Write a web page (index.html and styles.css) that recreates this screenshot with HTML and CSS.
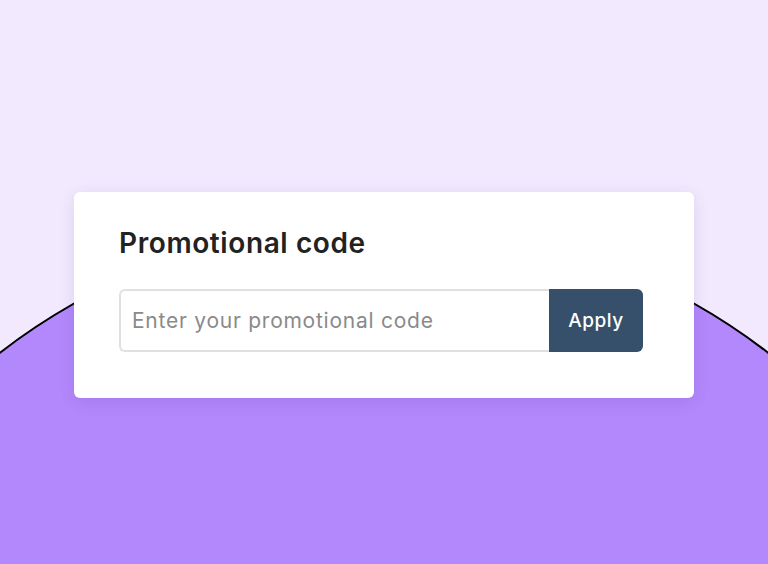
FILE: index.html
```html
<!DOCTYPE html>
<html lang="en">
<head>
	<meta charset="UTF-8">
	<title>Promotional code</title>
	<link rel="stylesheet" href="styles.css">
</head>
<body>
	<div class="stage">
		<div class="blob"></div>
		<div class="card">
			<h2 class="title">Promotional code</h2>
			<form class="promo">
				<input class="promo-input" type="text" placeholder="Enter your promotional code">
				<button class="promo-btn" type="button">Apply</button>
			</form>
		</div>
	</div>
</body>
</html>
```

FILE: styles.css
```css
*{
	margin: 0;
	padding: 0;
	box-sizing: border-box;
}
body{
	background: #f2e9fe;
	font-family: Inter, "Noto Sans", sans-serif;
}
.stage{
	position: relative;
	width: 768px;
	height: 564px;
	overflow: hidden;
	padding-top: 192px;
	padding-left: 74px;
}
.blob{
	position: absolute;
	left: -246px;
	top: 221px;
	width: 1260px;
	height: 1260px;
	border-radius: 50%;
	background: #b388fc;
	border: 2.5px solid #000;
}
.card{
	position: relative;
	width: 620px;
	height: 206px;
	background: #fff;
	border-radius: 6px;
	box-shadow: 0 4px 16px rgba(60, 30, 120, 0.12);
	padding: 32px 45px 0;
}
.title{
	font-size: 28px;
	font-weight: 600;
	color: #222;
	line-height: 38px;
	letter-spacing: 0.6px;
}
.promo{
	display: flex;
	margin-top: 27px;
	width: 524px;
	height: 63px;
}
.promo-input{
	flex: 1;
	border: 2px solid #dde1e4;
	border-right: none;
	border-radius: 6px 0 0 6px;
	padding: 0 11px;
	font-family: inherit;
	font-size: 21px;
	letter-spacing: 0.75px;
	color: #222;
	outline: none;
}
.promo-input::placeholder{
	color: #8a8a8a;
}
.promo-btn{
	width: 94px;
	border: none;
	border-radius: 0 6px 6px 0;
	background: #36506b;
	color: #fff;
	font-family: inherit;
	font-size: 19px;
	font-weight: 500;
	letter-spacing: 0.5px;
}
```
